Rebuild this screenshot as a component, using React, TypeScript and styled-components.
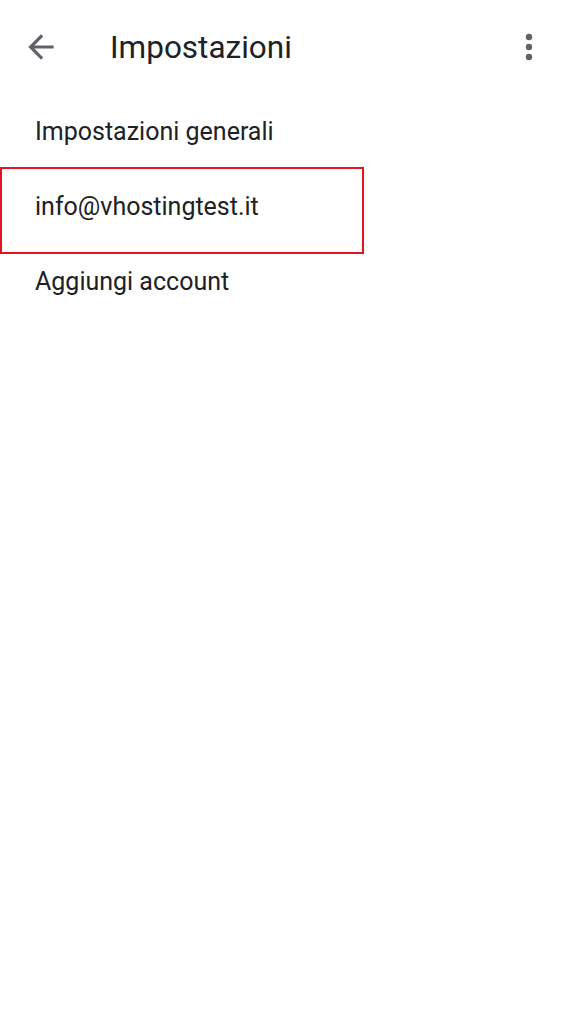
import React from "react";
import styled, { createGlobalStyle } from "styled-components";

const Global = createGlobalStyle`
  html, body { margin: 0; padding: 0; background: #ffffff; }
  body { font-family: Roboto, "Noto Sans", Arial, sans-serif; -webkit-font-smoothing: antialiased; }
`;

const Page = styled.div`
  width: 564px;
  min-height: 1024px;
  background: #ffffff;
`;

const TopBar = styled.header`
  height: 94px;
  display: flex;
  align-items: center;
  padding: 0 16px 0 22px;
  box-sizing: border-box;
`;

const IconButton = styled.button`
  width: 38px;
  height: 38px;
  padding: 0;
  border: 0;
  background: transparent;
  display: flex;
  align-items: center;
  justify-content: center;
  color: #5f6368;
  flex: none;
`;

const Title = styled.h1`
  margin: 0 0 0 50px;
  flex: 1;
  font-family: Roboto, "Noto Sans", Arial, sans-serif;
  font-weight: 400;
  font-size: 31.5px;
  color: #202124;
  letter-spacing: 0;
`;

const List = styled.ul`
  list-style: none;
  margin: 0;
  padding: 0;
`;

const Row = styled.li`
  position: relative;
  height: 75px;
  display: flex;
  align-items: center;
  padding-left: 35px;
  font-size: 25px;
  color: #202124;
`;

const Highlight = styled.span`
  position: absolute;
  left: 0;
  top: -2px;
  width: 364px;
  height: 87px;
  box-sizing: border-box;
  border: 2px solid #e3141f;
  pointer-events: none;
`;

const BackIcon = () => (
  <svg width="38" height="38" viewBox="0 0 24 24" fill="currentColor">
    <path d="M20 11H7.83l5.59-5.59L12 4l-8 8 8 8 1.41-1.41L7.83 13H20v-2z" />
  </svg>
);

const MoreIcon = () => (
  <svg width="38" height="38" viewBox="0 0 38 38" fill="currentColor">
    <circle cx="19" cy="9" r="3.2" />
    <circle cx="19" cy="19" r="3.2" />
    <circle cx="19" cy="29" r="3.2" />
  </svg>
);

const items = [
  { label: "Impostazioni generali", marked: false },
  { label: "info@vhostingtest.it", marked: true },
  { label: "Aggiungi account", marked: false },
];

export default function App() {
  return (
    <Page>
      <Global />
      <TopBar>
        <IconButton aria-label="Indietro">
          <BackIcon />
        </IconButton>
        <Title>Impostazioni</Title>
        <IconButton aria-label="Altre opzioni">
          <MoreIcon />
        </IconButton>
      </TopBar>
      <List>
        {items.map((it) => (
          <Row key={it.label}>
            {it.label}
            {it.marked && <Highlight />}
          </Row>
        ))}
      </List>
    </Page>
  );
}
